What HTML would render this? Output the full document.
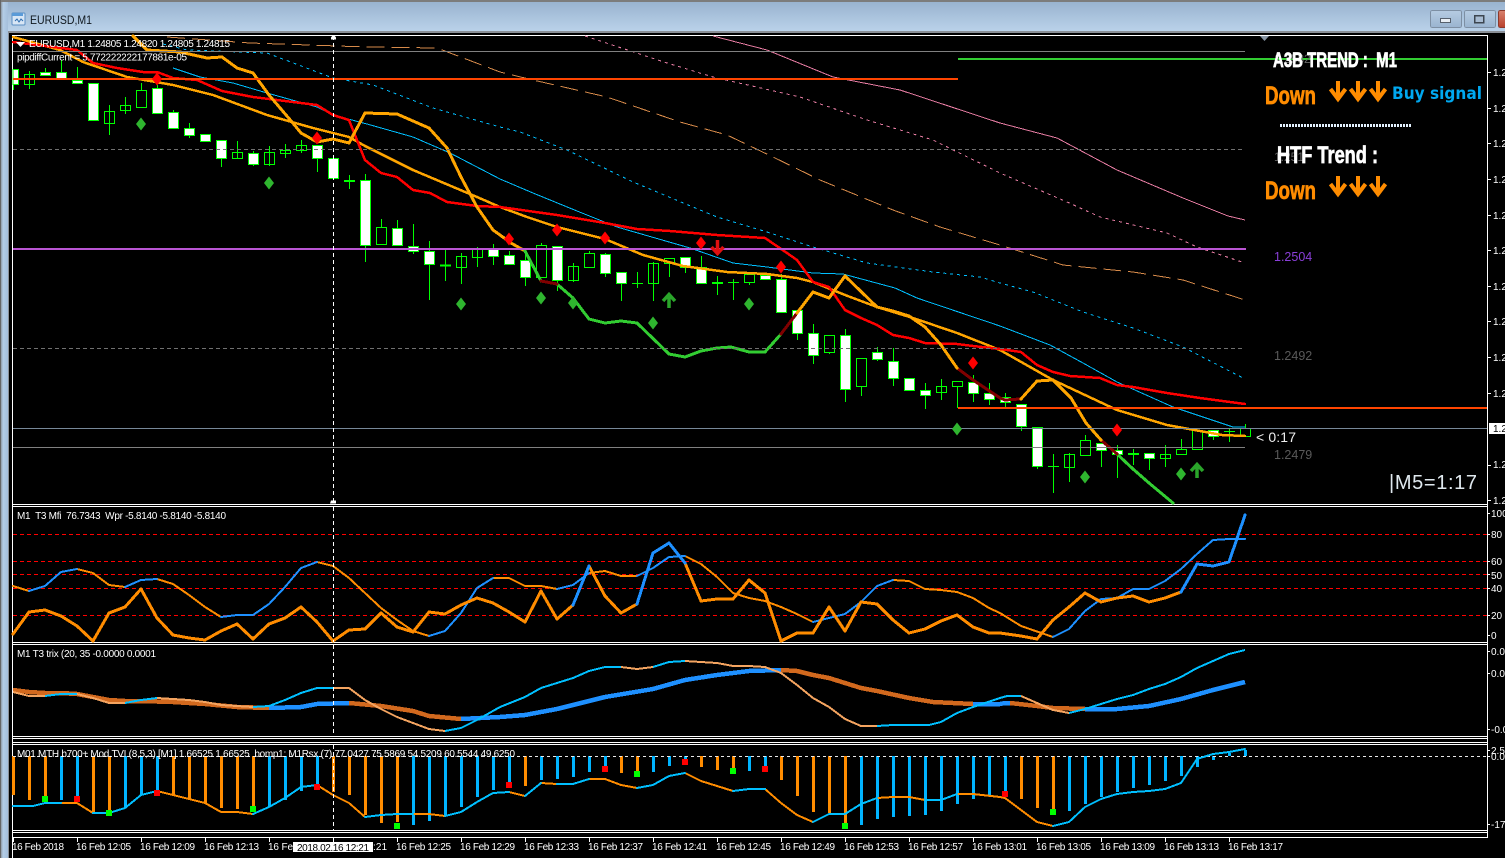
<!DOCTYPE html>
<html><head><meta charset="utf-8"><title>EURUSD,M1</title>
<style>
html,body{margin:0;padding:0;background:#000;width:1505px;height:858px;overflow:hidden}
svg{display:block;position:absolute;left:0;top:0}
text{font-family:"Liberation Sans",sans-serif;font-size:10px;fill:#fff}
.l{fill:none;stroke-linejoin:round;stroke-linecap:round;shape-rendering:crispEdges}
.c{shape-rendering:crispEdges}
.h{font-family:"Liberation Sans Narrow","Liberation Sans",sans-serif;font-weight:bold;stroke-width:.7px}
</style></head><body>
<svg width="1505" height="858" viewBox="0 0 1505 858" xmlns="http://www.w3.org/2000/svg">
<defs>
<linearGradient id="t" x1="0" y1="0" x2="0" y2="1"><stop offset="0" stop-color="#97b1ce"/><stop offset="1" stop-color="#bcd4eb"/></linearGradient>
<linearGradient id="s" x1="0" y1="0" x2="1" y2="0"><stop offset="0" stop-color="#8e9aa6"/><stop offset=".3" stop-color="#b4cde6"/><stop offset="1" stop-color="#a4bedb"/></linearGradient>
<linearGradient id="b" x1="0" y1="0" x2="0" y2="1"><stop offset="0" stop-color="#b6cce2"/><stop offset="1" stop-color="#9ab4d0"/></linearGradient>
<linearGradient id="r" x1="0" y1="0" x2="0" y2="1"><stop offset="0" stop-color="#d8826e"/><stop offset="1" stop-color="#b8402c"/></linearGradient>
</defs>
<rect width="1505" height="858" fill="#000"/>
<!-- window frame -->
<rect x="0" y="0" width="1505" height="33" fill="url(#t)"/>
<rect x="0" y="0" width="1505" height="2" fill="#7c7c7c"/>
<rect x="0" y="31" width="1505" height="2" fill="#8a8f96"/>
<rect x="0" y="0" width="1" height="858" fill="#666"/>
<rect x="1" y="2" width="7" height="856" fill="url(#s)"/>
<rect x="8" y="31" width="1" height="827" fill="#8a8f96"/>
<!-- title icon -->
<rect x="12" y="13" width="13" height="12" rx="1" fill="#d8e6f5" stroke="#5b8fc4"/>
<rect x="12" y="13" width="11" height="3" fill="#5b9bd8"/>
<path d="M15 21l2-2 2 3 2-3 2 2" fill="none" stroke="#2c6cb0"/>
<text x="30" y="24" style="font-size:12px;fill:#10181f" textLength="62" lengthAdjust="spacingAndGlyphs">EURUSD,M1</text>
<!-- window buttons -->
<g class="c">
<rect x="1430.5" y="10.5" width="31" height="17" rx="2" fill="url(#b)" stroke="#7d8fa3"/>
<rect x="1440.5" y="18.5" width="10" height="4" fill="#e8eef4" stroke="#56606c"/>
<rect x="1464.5" y="10.5" width="31" height="17" rx="2" fill="url(#b)" stroke="#7d8fa3"/>
<rect x="1474.5" y="15.5" width="9" height="7" fill="#a8bcd2" stroke="#3d4650" stroke-width="1.5"/>
<rect x="1498.5" y="10.5" width="8" height="17" rx="2" fill="url(#r)" stroke="#8c3a2c"/>
</g>
<!-- pane frames -->
<g fill="none" stroke="#fff" class="c">
<path d="M12.5 858V35.5H1487.5V837.5H12.5"/>
<path d="M12 504.5H1488M12 506.5H1488M12 642.5H1488M12 644.5H1488M12 736.5H1488M12 738.5H1488M12 742.5H1488M12 744.5H1488M12 830.5H1488M12 832.5H1488"/>
<path d="M12.5 35V838"/>
</g>
<rect x="9" y="33" width="3" height="825" fill="#000"/>

<!-- pink / brown / dashed bands -->
<g class="l" style="stroke-linecap:butt">
<path stroke="#e67ca2" d="M713 36L767 50L833 77L900 90L1000 123L1057 138L1117 170L1183 198L1228 216L1245 220"/>
<path stroke="#e67ca2" stroke-dasharray="3 4" d="M585 36L667 63L713 77L800 97L867 120L933 140L1000 173L1067 202L1100 217L1167 233L1197 247L1245 263"/>
<path stroke="#d68a4a" stroke-dasharray="18 7" d="M167 37L250 43L367 47L437 48L500 72L533 80L607 97L680 122L727 135L773 157L820 180L893 210L940 227L1000 245L1063 265L1133 272L1183 280L1245 300"/>
<path stroke="#00bfff" stroke-dasharray="3 4" d="M163 44L187 50L267 53L317 72L333 78L373 85L433 108L500 127L520 132L567 150L633 182L717 217L767 232L813 247L867 263L933 272L980 277L1000 283L1033 292L1083 312L1133 328L1183 347L1245 379"/>
<path stroke="#00bfff" d="M173 68L200 77L233 83L267 93L317 107L333 115L367 124L413 137L450 153L500 179L533 193L577 211L617 227L690 248L733 263L767 267L813 273L843 274L895 288L917 298L1000 326L1050 345L1083 363L1117 382L1173 407L1233 427L1245 427"/>
</g>

<!-- candles -->
<path class="c" fill="none" stroke="#0f0" d="M13.5 69V90M29.5 71V89M45.5 68V75M61.5 60V72M77.5 67V83M109.5 105V135M125.5 97V114M141.5 83V90M157.5 85V88M173.5 110V112M189.5 123V138M221.5 158V167M237.5 141V159M253.5 151V166M269.5 146V166M285.5 144V158M301.5 140V153M317.5 158V172M349.5 175V189M365.5 174V262M381.5 219V227M397.5 220V228M413.5 224V254M429.5 241V300M445.5 250V281M461.5 253V284M477.5 247V267M493.5 244V265M509.5 251V265M525.5 250V286M541.5 243V245M557.5 280V291M573.5 263V282M589.5 251V253M605.5 253V277M621.5 283V301M637.5 272V288M653.5 262V301M669.5 263V277M685.5 267V273M701.5 256V267M717.5 276V295M733.5 279V300M749.5 282V285M781.5 274V279M797.5 333V340M813.5 324V364M829.5 352V354M845.5 329V402M861.5 386V396M877.5 347V361M893.5 348V386M925.5 383V409M941.5 379V400M957.5 386V408M973.5 375V402M989.5 383V405M1005.5 393V407M1021.5 426V431M1037.5 466V469M1053.5 454V493M1069.5 453V482M1085.5 435V440M1101.5 450V467M1117.5 445V478M1133.5 449V465M1149.5 458V470M1165.5 445V467M1181.5 439V449M1213.5 436V440M1229.5 429V442M1245.5 424V428M632 283.5H643M728 282.5H739M1048 466.5H1059M1224 431.5H1235"/>
<path class="c" stroke="#0f0" stroke-width="2" d="M344 181H355M712 283H723M1128 454H1139M440 265.5H451"/>
<path class="c" fill="none" stroke="#0f0" d="M24.5 74.5h10v10h-10zM104.5 111.5h10v12h-10zM120.5 105.5h10v5h-10zM136.5 90.5h10v17h-10zM232.5 152.5h10v6h-10zM264.5 152.5h10v12h-10zM280.5 150.5h10v3h-10zM296.5 145.5h10v5h-10zM376.5 227.5h10v17h-10zM456.5 256.5h10v11h-10zM472.5 248.5h10v9h-10zM536.5 245.5h10v32h-10zM568.5 266.5h10v14h-10zM584.5 253.5h10v14h-10zM648.5 263.5h10v20h-10zM664.5 258.5h10v5h-10zM744.5 274.5h10v8h-10zM824.5 335.5h10v17h-10zM856.5 358.5h10v28h-10zM936.5 386.5h10v6h-10zM952.5 381.5h10v5h-10zM1064.5 454.5h10v13h-10zM1080.5 440.5h10v15h-10zM1160.5 454.5h10v4h-10zM1176.5 449.5h10v5h-10zM1192.5 430.5h10v19h-10zM1240.5 428.5h10v8h-10z"/>
<path class="c" fill="#fff" stroke="#0f0" d="M13 69.5h5.5v15h-5.5zM40.5 72.5h10v3h-10zM56.5 72.5h10v6h-10zM72.5 80.5h10v3h-10zM88.5 83.5h10v37h-10zM152.5 88.5h10v25h-10zM168.5 112.5h10v16h-10zM184.5 128.5h10v7h-10zM200.5 134.5h10v7h-10zM216.5 140.5h10v18h-10zM248.5 153.5h10v11h-10zM312.5 145.5h10v13h-10zM328.5 158.5h10v20h-10zM360.5 180.5h10v65h-10zM392.5 228.5h10v17h-10zM408.5 246.5h10v5h-10zM424.5 251.5h10v13h-10zM488.5 249.5h10v7h-10zM504.5 255.5h10v9h-10zM520.5 260.5h10v17h-10zM552.5 246.5h10v34h-10zM600.5 254.5h10v19h-10zM616.5 272.5h10v11h-10zM680.5 257.5h10v10h-10zM696.5 267.5h10v16h-10zM760.5 275.5h10v4h-10zM776.5 279.5h10v33h-10zM792.5 310.5h10v23h-10zM808.5 333.5h10v22h-10zM840.5 335.5h10v54h-10zM872.5 352.5h10v7h-10zM888.5 361.5h10v17h-10zM904.5 378.5h10v12h-10zM920.5 390.5h10v5h-10zM968.5 382.5h10v11h-10zM984.5 393.5h10v6h-10zM1000.5 397.5h10v5h-10zM1016.5 404.5h10v22h-10zM1032.5 427.5h10v39h-10zM1096.5 443.5h10v7h-10zM1112.5 450.5h10v4h-10zM1144.5 453.5h10v5h-10zM1208.5 430.5h10v6h-10z"/>

<!-- medium EMA, red, thick T3 -->
<g class="l">
<path stroke="#ffa500" stroke-width="2.5" d="M13 37L60 50L83 62L127 77L173 85L213 95L267 115L313 128L349 137L365 146L413 170L477 197L500 207L527 217L557 227L605 239L643 255L683 266L727 272L767 274L797 278L813 282L845 295L877 307L913 318L957 333L1000 350L1053 380L1117 410L1167 425L1200 431L1222 435L1245 436"/>
<path stroke="#f00" stroke-width="2.5" d="M13 42L77 50L93 63L117 68L143 72L157 72L173 78L197 80L222 91L253 97L293 102L317 105L333 115L349 120L365 160L381 173L397 177L413 190L430 193L447 202L477 206L500 207L557 215L605 223L637 229L670 231L717 235L765 238L787 253L797 260L813 282L829 287L845 310L861 318L877 325L893 335L909 338L925 343L957 344L973 346L1000 349L1021 352L1037 365L1053 372L1070 376L1100 378L1117 385L1133 387L1167 393L1200 398L1245 404"/>
<path stroke="#ffa500" stroke-width="3" d="M133 36L147 50L180 52L207 58L222 57L237 68L253 73L269 95L292 122L301 133L317 142L333 139L349 143L365 113L397 114L429 128L447 148L461 177L477 207L493 230L500 235L511 243L525 251"/>
<path stroke="#32cd32" stroke-width="3" d="M525 251L541 281M557 284L573 298L589 319L605 323L621 321L637 323L669 354L685 357L701 351L717 348L731 347L749 352L765 352L781 334M1117 454L1133 469L1149 483L1173 503"/>
<path stroke="#800000" stroke-width="3" d="M541 281L557 284M781 334L797 313M957 368L973 380L1000 398L1005 400L1020 399M1101 440L1117 454"/>
<path stroke="#ffa500" stroke-width="3" d="M797 313L813 292L829 298L845 276L877 307L893 311L909 316L925 327L941 345L957 368M1021 399L1037 381L1053 380L1071 398L1086 423L1101 440"/>
</g>

<!-- objects -->
<g class="c">
<rect x="13" y="51" width="1232" height="1" fill="#808080"/>
<rect x="958" y="58" width="529" height="2" fill="#32cd32"/>
<rect x="13" y="78" width="945" height="2" fill="#ff4500"/>
<path d="M13 149.5H1245M13 348.5H1245" stroke="#707070" stroke-dasharray="4 3"/>
<rect x="13" y="248" width="1233" height="2" fill="#ba55d3"/>
<rect x="958" y="407" width="529" height="2" fill="#ff4500"/>
<rect x="13" y="428" width="1474" height="1" fill="#778899"/>
<rect x="13" y="447" width="1232" height="1" fill="#808080"/>
</g>

<!-- diamonds -->
<path fill="#f00" d="M157 72.5l5 6.5-5 6.5-5-6.5zM317 131.5l5 6.5-5 6.5-5-6.5zM509 232.5l5 6.5-5 6.5-5-6.5zM557 223.5l5 6.5-5 6.5-5-6.5zM605 231.5l5 6.5-5 6.5-5-6.5zM701 236.5l5 6.5-5 6.5-5-6.5zM781 260.5l5 6.5-5 6.5-5-6.5zM973 356.5l5 6.5-5 6.5-5-6.5zM1117 423.5l5 6.5-5 6.5-5-6.5z"/>
<path fill="#2fb52f" d="M141 117.5l5 6.5-5 6.5-5-6.5zM269 176.5l5 6.5-5 6.5-5-6.5zM461 297.5l5 6.5-5 6.5-5-6.5zM541 291.5l5 6.5-5 6.5-5-6.5zM573 296.5l5 6.5-5 6.5-5-6.5zM653 316.5l5 6.5-5 6.5-5-6.5zM749 297.5l5 6.5-5 6.5-5-6.5zM957 422.5l5 6.5-5 6.5-5-6.5zM1085 470.5l5 6.5-5 6.5-5-6.5zM1181 467.5l5 6.5-5 6.5-5-6.5z"/>
<!-- signal arrows -->
<path fill="none" stroke-linejoin="miter" stroke="#2aa52a" stroke-width="3.5" d="M669 308V295M663 301L669 294.500L675 301M1197 478V465M1191 471L1197 464.500L1203 471"/>
<path fill="none" stroke-linejoin="miter" stroke="#e01010" stroke-width="3.5" d="M717.500 240V253M711.500 247L717.500 253.500L723.500 247"/>

<!-- main overlay text -->
<path fill="#fff" d="M16 42h9l-4.500 5z"/>
<text x="29" y="47" textLength="201">EURUSD,M1  1.24805 1.24820 1.24805 1.24815</text>
<text x="17" y="60.500" textLength="170">pipdiffCurrent = 5.772222222177881e-05</text>
<text x="1274" y="63" style="font-size:12px;fill:#666">1.2532</text>
<text x="1274" y="161" style="font-size:12px;fill:#666">1.251</text>
<text x="1274" y="261" style="font-size:12.500px;fill:#8a3fd8">1.2504</text>
<text x="1274" y="360" style="font-size:12.500px;fill:#5a5a5a">1.2492</text>
<text x="1274" y="459" style="font-size:12.500px;fill:#5a5a5a">1.2479</text>
<text x="1256" y="442" style="font-size:14px;fill:#eee" textLength="40">&lt; 0:17</text>
<text x="1389" y="489" style="font-size:20px;fill:#dfe8ee" textLength="88">|M5=1:17</text>

<text class="h" x="1273" y="67" style="font-size:21px;stroke:#fff" textLength="124" lengthAdjust="spacingAndGlyphs" xml:space="preserve">A3B TREND :  M1</text>
<text class="h" x="1265" y="104" style="font-size:25px;fill:#ff8c00;stroke:#ff8c00" textLength="51" lengthAdjust="spacingAndGlyphs">Down</text>
<text x="1392" y="99" style="font-family:'DejaVu Sans',sans-serif;font-size:16.500px;font-weight:bold;fill:#00a8f0" textLength="90" lengthAdjust="spacingAndGlyphs">Buy signal</text>
<text class="h" x="1277" y="163" style="font-size:24px;stroke:#fff" textLength="101" lengthAdjust="spacingAndGlyphs">HTF Trend :</text>
<text class="h" x="1265" y="199" style="font-size:25px;fill:#ff8c00;stroke:#ff8c00" textLength="51" lengthAdjust="spacingAndGlyphs">Down</text>
<path fill="none" stroke-linejoin="miter" stroke="#ff8c00" stroke-width="4" d="M1338 81V100M1330.500 89L1338 99L1345.500 89M1358 81V100M1350.500 89L1358 99L1365.500 89M1378 81V100M1370.500 89L1378 99L1385.500 89M1338 176V195M1330.500 184L1338 194L1345.500 184M1358 176V195M1350.500 184L1358 194L1365.500 184M1378 176V195M1370.500 184L1378 194L1385.500 184"/>
<path class="c" stroke="#e4f2ff" stroke-width="3" stroke-dasharray="2 1" d="M1280 125.500H1412"/>

<path fill="#8794a3" d="M1260 36h9l-4.500 5z"/>

<!-- pane 2 -->
<path class="c" stroke="#f00" stroke-dasharray="4 3" d="M13 534.500H1487M13 561.500H1487M13 574.500H1487M13 588.500H1487M13 615.500H1487"/>
<g class="l">
<path stroke="#ff8c00" stroke-width="2" d="M13 586L29 591M77 569L93 573L109 585L125 587M157 579L173 584L189 595L205 607L221 617M317 562L333 566L349 578L365 593L381 608L397 620L413 631L429 636M493 578L509 578L525 586L541 586L557 589M589 573L605 571L621 576L637 576M685 556L701 564L717 577L733 593L749 598L765 601L781 607L797 614L813 622M893 580L909 581L925 589L941 590L957 592L973 598L989 608L1000 613L1021 626L1053 637"/>
<path stroke="#1e90ff" stroke-width="2" d="M29 591L45 586L61 572L77 569M125 587L141 580L157 579M221 617L237 615L253 615L269 604L285 587L301 568L317 562M429 636L445 631L461 613L477 588L493 578M557 589L573 585L589 573M637 576L653 568L669 557L685 556M813 622L829 618L845 614L861 602L877 586L893 580M1053 637L1069 629L1085 611L1101 599L1117 598L1133 589L1149 589L1165 581L1181 569L1197 554L1213 540L1229 539L1245 539"/>
<path stroke="#ff8c00" stroke-width="3" d="M13 634L29 612L45 610L61 616L77 626L93 641L109 613L125 607L141 589L157 618L173 635L189 638L205 640L221 631L237 624L253 639L269 624L285 618L301 607L317 622L333 641L349 630L365 629L381 613L397 627L413 632L429 612L445 614L461 605L477 598L493 603L509 612L525 622L541 591L557 619L573 605M589 566L605 596L621 613L637 604M685 563L701 601L717 599L733 599L749 580L765 593L781 641L797 633L813 633L829 607L845 631L861 602L877 604L893 620L909 633L925 629L941 621L957 615L973 627L989 633L1000 633L1021 636L1037 639L1053 620L1069 607L1085 593L1101 602L1117 598L1133 596L1149 602L1165 598L1181 592"/>
<path stroke="#1e90ff" stroke-width="3" d="M573 605L589 566M637 604L653 553L669 543L685 563M1181 592L1197 564L1213 566L1229 562L1245 515"/>
</g>
<text x="17" y="519" textLength="209" xml:space="preserve">M1  T3 Mfi  76.7343  Wpr -5.8140 -5.8140 -5.8140</text>

<!-- pane 3 -->
<g class="l" style="stroke-linecap:butt">
<path stroke="#d2691e" stroke-width="4.500" d="M13 690L29 692L45 693L61 693L77 694L93 697L109 700L125 701L141 701L173 702L205 704L237 707L269 708M349 703L381 706L413 711L429 716L461 719M781 670L797 671L813 675L829 678L861 688L877 691L909 698L933 702L973 704M1010 703L1037 706L1053 708L1085 709"/>
<path stroke="#1e90ff" stroke-width="4.500" d="M269 708L301 707L317 704L349 703M461 719L500 717L525 715L557 709L573 705L605 697L653 689L685 680L717 675L749 671L781 670M973 704L1000 704L1005 703L1010 703M1085 709L1117 709L1149 706L1181 699L1213 690L1245 682"/>
<path stroke="#f4a460" stroke-width="2" d="M13 692L29 696L45 696M77 694L93 698L109 703L125 703M157 698L173 699L189 700L205 702L221 705L237 706L253 707M333 688L349 688L365 700L381 709L397 717L413 723L429 729L445 731M621 667L637 669L653 667M685 661L701 662L717 663L733 666L749 666L765 667L781 673L797 685L813 698L829 707L845 719L861 726L877 726M1021 696L1037 703L1053 710L1069 713"/>
<path stroke="#00bfff" stroke-width="2" d="M45 696L61 694L77 694M125 703L141 700L157 698M253 707L269 706L285 700L301 693L317 688L333 688M445 731L461 728L477 720L500 707L525 697L541 688L557 683L573 678L589 671L605 667L621 667M653 667L669 662L685 661M877 726L893 725L909 725L929 725L941 722L957 713L973 707L1000 698L1007 696L1021 696M1069 713L1085 709L1101 704L1117 699L1133 695L1149 689L1165 684L1181 677L1197 668L1213 661L1229 654L1245 650"/>
</g>
<text x="17" y="657" textLength="139">M1 T3 trix (20, 35 -0.0000 0.0001</text>

<!-- pane 4 -->
<path class="c" stroke="#ff8c00" stroke-width="3" d="M13.500 756V795M29.500 756V800M45.500 756V799M93.500 756V813M109.500 756V812M173.500 756V795M189.500 756V800M205.500 756V803M221.500 756V808M237.500 756V809M253.500 756V808M333.500 756V792M349.500 756V795M365.500 756V815M381.500 756V823M397.500 756V822M525.500 756V786M621.500 756V773M637.500 756V772M701.500 756V767M717.500 756V770M733.500 756V768M781.500 756V780M797.500 756V796M813.500 756V812M829.500 756V813M845.500 756V823M1021.500 756V799M1037.500 756V808M1053.500 756V810"/>
<path class="c" stroke="#00b4ff" stroke-width="3" d="M61.500 756V800M77.500 756V798M125.500 756V808M141.500 756V795M157.500 756V792M269.500 756V807M285.500 756V800M301.500 756V791M317.500 756V787M413.500 756V825M429.500 756V821M445.500 756V815M461.500 756V807M477.500 756V797M493.500 756V790M509.500 756V787M541.500 756V780M557.500 756V779M573.500 756V777M589.500 756V772M605.500 756V768M653.500 756V772M669.500 756V766M685.500 756V759M749.500 756V771M765.500 756V767M861.500 756V825M877.500 756V819M893.500 756V817M909.500 756V816M925.500 756V815M941.500 756V811M957.500 756V804M973.500 756V799M989.500 756V795M1005.500 756V792M1069.500 756V811M1085.500 756V804M1101.500 756V797M1117.500 756V792M1133.500 756V788M1149.500 756V785M1165.500 756V781M1181.500 756V776M1197.500 756V767M1213.500 756V760M1229.500 753V756M1245.500 750V756"/>
<path class="c" stroke="#e8e8e8" stroke-dasharray="3 3" d="M13 756.500H1487"/>
<g class="l" stroke-width="2">
<path stroke="#ff8c00" d="M61 803L77 803L93 813M157 791L173 795L189 799L205 803L221 812L237 812L253 814M317 785L333 795L349 803L365 817M413 814L429 814L445 816M509 792L525 796M541 783L557 784M589 779L605 779L621 785L637 788M685 773L701 781L717 786L733 791M765 789L781 803L797 815L813 822M877 798L893 797L909 797L925 800M957 794L973 794L1000 797L1005 798L1021 810L1037 822L1053 826"/>
<path stroke="#00bfff" d="M13 806L33 806L45 803L61 803M93 813L109 813L125 808L141 795L157 791M253 814L269 807L285 798L301 787L317 785M365 817L381 815L397 814L413 814M445 816L461 812L477 802L493 793L509 792M525 796L541 783M557 784L573 784L589 779M637 788L653 785L669 776L685 773M733 791L749 789L765 789M813 822L829 814L845 814L861 804L877 798M925 800L941 800L957 794M1053 826L1069 822L1085 807L1101 799L1117 794L1133 792L1149 791L1165 789L1181 783L1197 759L1213 754L1229 752L1245 749"/>
</g>
<g class="c">
<path fill="#0f0" d="M42 796h6v6h-6zM106 810h6v6h-6zM250 806h6v6h-6zM394 823h6v6h-6zM634 771h6v6h-6zM730 768h6v6h-6zM842 823h6v6h-6zM1050 809h6v6h-6z"/>
<path fill="#f00" d="M74 796h6v6h-6zM154 790h6v6h-6zM314 784h6v6h-6zM506 782h6v6h-6zM602 766h6v6h-6zM682 759h6v6h-6zM762 766h6v6h-6zM1002 791h6v6h-6z"/>
</g>
<text x="17" y="757" textLength="498" xml:space="preserve">M01 MTH b700+ Mod.TVI (8,5,3) [M1] 1.66525 1.66525  bomp1: M1Rsx (7) 77.0427 75.5869 54.5209 60.5544 49.6250</text>

<!-- crosshair -->
<path class="c" stroke="#fff" stroke-dasharray="4 3" d="M333.500 36V504M333.500 507V642M333.500 645V736M333.500 745V830"/>
<path fill="#fff" d="M331 39.500h5v-2l-1.500-2h-2l-1.500 2zM331 500.500h5v3h-6z"/>

<!-- right axis -->
<path class="c" stroke="#fff" d="M1487 72.500h4M1487 108.500h4M1487 143.500h4M1487 179.500h4M1487 215.500h4M1487 250.500h4M1487 286.500h4M1487 321.500h4M1487 357.500h4M1487 393.500h4M1487 465.500h4M1487 500.500h4M1487 513.500h3M1487 534.500h3M1487 561.500h3M1487 574.500h3M1487 588.500h3M1487 615.500h3M1487 635.500h3M1487 651.500h3M1487 673.500h3M1487 729.500h3M1487 750.500h3M1487 756.500h3M1487 824.500h3"/>
<g>
<text x="1493" y="76">1.2</text><text x="1493" y="112">1.2</text><text x="1493" y="147">1.2</text><text x="1493" y="183">1.2</text><text x="1493" y="219">1.2</text><text x="1493" y="254">1.2</text><text x="1493" y="290">1.2</text><text x="1493" y="325">1.2</text><text x="1493" y="361">1.2</text><text x="1493" y="397">1.2</text><text x="1493" y="468">1.2</text><text x="1493" y="504">1.2</text>
<text x="1491" y="517">100</text><text x="1491" y="538">80</text><text x="1491" y="565">60</text><text x="1491" y="579">50</text><text x="1491" y="592">40</text><text x="1491" y="619">20</text><text x="1491" y="639">0</text>
<text x="1491" y="655">0.00</text><text x="1491" y="677">0.00</text><text x="1491" y="733">-0.0</text>
<text x="1491" y="754">2.5</text><text x="1491" y="760">0.0</text><text x="1491" y="828">-17.</text>
</g>
<rect x="1489" y="423" width="16" height="11" fill="#fff"/>
<text x="1493" y="432" style="fill:#000">1.2</text>

<!-- time axis -->
<path class="c" stroke="#fff" d="M13.500 837v5M77.500 837v5M141.500 837v5M205.500 837v5M269.500 837v5M333.500 837v5M397.500 837v5M461.500 837v5M525.500 837v5M589.500 837v5M653.500 837v5M717.500 837v5M781.500 837v5M845.500 837v5M909.500 837v5M973.500 837v5M1037.500 837v5M1101.500 837v5M1165.500 837v5M1229.500 837v5"/>
<g>
<text x="12" y="850" textLength="52">16 Feb 2018</text>
<text x="76" y="850" textLength="55">16 Feb 12:05</text>
<text x="140" y="850" textLength="55">16 Feb 12:09</text>
<text x="204" y="850" textLength="55">16 Feb 12:13</text>
<text x="268" y="850" textLength="25">16 Fe</text>
<text x="373" y="850" textLength="14">:21</text>
<text x="396" y="850" textLength="55">16 Feb 12:25</text>
<text x="460" y="850" textLength="55">16 Feb 12:29</text>
<text x="524" y="850" textLength="55">16 Feb 12:33</text>
<text x="588" y="850" textLength="55">16 Feb 12:37</text>
<text x="652" y="850" textLength="55">16 Feb 12:41</text>
<text x="716" y="850" textLength="55">16 Feb 12:45</text>
<text x="780" y="850" textLength="55">16 Feb 12:49</text>
<text x="844" y="850" textLength="55">16 Feb 12:53</text>
<text x="908" y="850" textLength="55">16 Feb 12:57</text>
<text x="972" y="850" textLength="55">16 Feb 13:01</text>
<text x="1036" y="850" textLength="55">16 Feb 13:05</text>
<text x="1100" y="850" textLength="55">16 Feb 13:09</text>
<text x="1164" y="850" textLength="55">16 Feb 13:13</text>
<text x="1228" y="850" textLength="55">16 Feb 13:17</text>
</g>
<rect x="293" y="842" width="80" height="10" fill="#fff"/>
<text x="297" y="851" style="fill:#000" textLength="72">2018.02.16 12:21</text>
</svg>
</body></html>
